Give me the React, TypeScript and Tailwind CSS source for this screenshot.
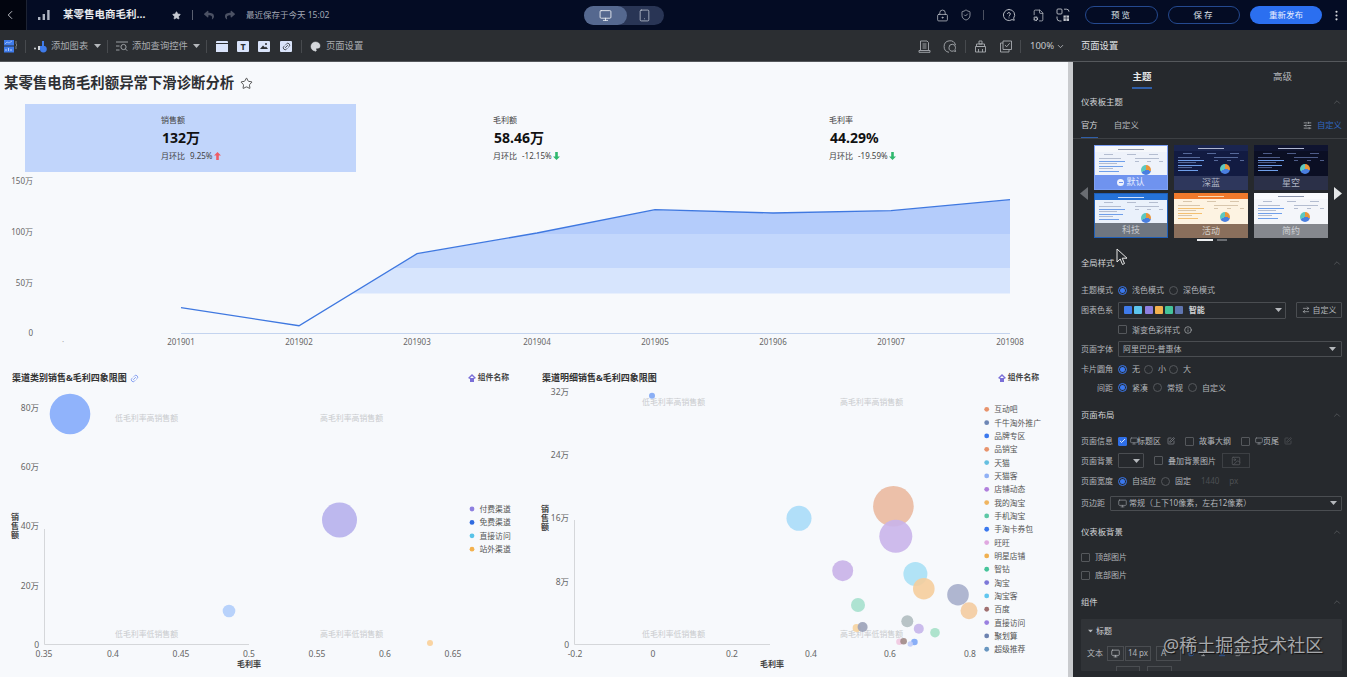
import React from "react";
import { ChevronLeft, ChevronUp, ChevronDown, Star, Monitor, Tablet, LockKeyhole, ShieldCheck, FileCog, EllipsisVertical, SlidersHorizontal, ArrowRightLeft, Info, SquarePen, Image as ImageIcon, Check, Link2, Palette, Bold, Italic, Underline, Strikethrough } from "lucide-react";
import { FaReply, FaShare } from "react-icons/fa";

const Caret = ({ c = "#b5b8bc" }: { c?: string }) => (
  <svg width="7" height="4" viewBox="0 0 7 4"><path d="M0 0h7L3.5 4z" fill={c} /></svg>
);

const Sep = ({ cls = "" }: { cls?: string }) => <span className={`block w-px h-[13px] bg-[#474a4e] ${cls}`} />;

function TopBar() {
  return (
    <div className="flex items-center h-[30px] bg-[#040c24] text-white shrink-0">
      <div className="flex items-center h-full w-[27px] bg-[#02050f] border-r border-[#1d2333] pl-[3px]">
        <ChevronLeft size={14} strokeWidth={1.6} color="#c8cad0" />
      </div>
      <svg className="ml-[11px]" width="12" height="11" viewBox="0 0 12 11">
        <rect x="0" y="7" width="2.4" height="3" fill="#aeb4c2" />
        <rect x="4.6" y="4" width="2.4" height="6" fill="#aeb4c2" />
        <rect x="9.2" y="0" width="2.4" height="10" fill="#aeb4c2" />
      </svg>
      <span className="ml-[13px] text-[10.5px] font-bold w-[100px] whitespace-nowrap text-[#e8eaee]">某零售电商毛利...</span>
      <Star className="ml-[9px]" size={9} fill="#c6cad2" color="#c6cad2" />
      <span className="ml-[11px] block w-px h-[10px] bg-[#5a6070]" />
      <FaReply className="ml-[11px]" size={10} color="#4c5264" />
      <FaShare className="ml-[11px]" size={10} color="#4c5264" />
      <span className="ml-[11px] text-[8.5px] text-[#a3a8b4] whitespace-nowrap w-[80px]">最近保存于今天 15:02</span>
      <div className="ml-[258px] flex items-center h-[19px] w-[80px] rounded-full bg-[#293555]">
        <div className="flex items-center justify-center h-full w-[43px] rounded-full bg-[#55688f]"><Monitor size={13} color="#eef0f5" strokeWidth={1.6} /></div>
        <div className="flex items-center justify-center flex-1 pr-[2px]"><Tablet size={13} color="#c5cbd8" strokeWidth={1.4} /></div>
      </div>
      <LockKeyhole className="ml-[272px]" size={13} color="#c0c3ca" strokeWidth={1.4} />
      <ShieldCheck className="ml-[11px]" size={12} color="#c0c3ca" strokeWidth={1.4} />
      <span className="ml-[11px] block w-px h-[10px] bg-[#4b5060]" />
      <svg className="ml-[18px]" width="14" height="14" viewBox="0 0 24 24" fill="none" stroke="#c0c3ca" strokeWidth="1.6" strokeLinecap="round" strokeLinejoin="round">
        <path d="M12 2.5a9.5 9.5 0 1 0 5.2 17.4l3.8 1.1-1-3.6A9.5 9.5 0 0 0 12 2.5z" />
        <path d="M9.4 9.4a2.6 2.6 0 0 1 5 .8c0 1.7-2.4 2.3-2.4 3.6" />
        <path d="M12 17h.01" />
      </svg>
      <FileCog className="ml-[16px]" size={13} color="#c0c3ca" strokeWidth={1.4} />
      <svg className="ml-[11px]" width="14" height="14" viewBox="0 0 14 14" fill="none" stroke="#c0c3ca" strokeWidth=".9">
        <rect x="1" y="1" width="5" height="5" rx="1" />
        <path d="M8 1.2h2.5A2.5 2.5 0 0 1 13 3.7" />
        <path d="M1 8.5v1.8A2.7 2.7 0 0 0 3.7 13H5.5" />
        <rect x="7.5" y="7.5" width="5.5" height="5.5" fill="#c0c3ca" stroke="none" />
        <path d="M7.5 10h5.5M10.2 7.5v5.5" stroke="#040c24" strokeWidth=".6" />
      </svg>
      <button className="ml-[15px] h-[18px] w-[73px] rounded-full border border-[#24498f] text-[8.5px] tracking-[2px] text-[#dfe2e8]">预览</button>
      <button className="ml-[10px] h-[18px] w-[72px] rounded-full border border-[#24498f] text-[8.5px] tracking-[2px] text-[#dfe2e8]">保存</button>
      <button className="ml-[10px] h-[18px] w-[72px] rounded-full bg-[#2b6ff0] text-[8.5px] text-[#e8eeff]">重新发布</button>
      <EllipsisVertical className="ml-[8px]" size={13} color="#d8dade" />
    </div>
  );
}

const TileBox = ({ children, cls = "" }: { children?: React.ReactNode; cls?: string }) => (
  <span className={`flex items-center justify-center w-[12px] h-[11px] bg-[#d9e3fa] rounded-[1px] ${cls}`}>{children}</span>
);

function ToolBar() {
  return (
    <div className="flex items-center h-[32px] pt-[1px] bg-[#2b2e32] border-b border-[#55585c] shrink-0 text-[9.3px] text-[#a8abb0] whitespace-nowrap">
      <svg className="ml-[4px]" width="14" height="13" viewBox="0 0 14 13">
        <rect width="10" height="5.5" fill="#3f7bea" />
        <rect y="6.5" width="10" height="6" fill="#3f7bea" />
        <path d="M1 4l2-2 2 1 3-2" stroke="#cfe0ff" strokeWidth=".6" fill="none" />
        <path d="M2 11V9M4.5 11V8M7 11V9" stroke="#cfe0ff" strokeWidth=".8" />
        <path d="M12 1v3l1 1-1 1v3" stroke="#9a9da2" strokeWidth=".7" fill="none" />
      </svg>
      <Sep cls="ml-[7px]" />
      <svg className="ml-[8px]" width="14" height="13" viewBox="0 0 14 13">
        <rect x="0" y="7.5" width="2" height="2" rx="1" fill="#d5d8dc" />
        <rect x="4" y="6" width="2" height="4" fill="#d5d8dc" />
        <rect x="8" y="1" width="2" height="5" fill="#3f7bea" />
        <path d="M6 9a3.4 3.4 0 1 0 6.8 0c0-1.5-1-2.6-1.8-3H6z" fill="#3f7bea" />
      </svg>
      <span className="ml-[3px] w-[37px]">添加图表</span>
      <span className="ml-[6px] flex"><Caret /></span>
      <Sep cls="ml-[6px]" />
      <svg className="ml-[8px]" width="12" height="11" viewBox="0 0 12 11" fill="none" stroke="#a8abb0" strokeWidth=".9">
        <path d="M0 1h12M0 5h3.5M0 9h3.5" />
        <circle cx="7.5" cy="6" r="2.6" />
        <path d="M9.5 8l1.8 1.8" />
      </svg>
      <span className="ml-[4px] w-[57px]">添加查询控件</span>
      <span className="ml-[4px] flex"><Caret /></span>
      <Sep cls="ml-[6px]" />
      <TileBox cls="ml-[9px]">
        <span className="block w-full h-[9px] mt-[2px] bg-[#d9e3fa] border-t border-[#2b2e32]" />
      </TileBox>
      <TileBox cls="ml-[9px]"><span className="text-[9px] leading-none font-bold text-[#2b2e32]">T</span></TileBox>
      <TileBox cls="ml-[9px]">
        <svg width="10" height="8" viewBox="0 0 10 8"><path d="M1 7l3-3.5 2 2 1-1 2 2.5z" fill="#2b2e32" /><circle cx="7" cy="2" r="1" fill="#2b2e32" /></svg>
      </TileBox>
      <TileBox cls="ml-[10px]"><Link2 size={9} color="#2b2e32" strokeWidth={2} className="-rotate-45" /></TileBox>
      <Sep cls="ml-[9px]" />
      <Palette className="ml-[8px]" size={11} color="#d5d8dc" fill="#d5d8dc" strokeWidth={1} />
      <span className="ml-[5px] w-[38px]">页面设置</span>
      <svg className="ml-[554px]" width="13" height="13" viewBox="0 0 13 13" fill="none" stroke="#a8abb0" strokeWidth=".9">
        <path d="M2.5 10V1h6.5l1.5 1.5V10" />
        <path d="M4.5 4h4M4.5 6h4M4.5 8h4" />
        <path d="M1 10.5h11v1.8H1z" />
      </svg>
      <svg className="ml-[12px]" width="14" height="13" viewBox="0 0 14 13" fill="none" stroke="#a8abb0" strokeWidth=".9">
        <path d="M6 12.3A5.8 5.8 0 1 1 12.5 5" />
        <path d="M6 7.5a3 3 0 0 1 6.5 0c0 1.2-.5 2-.5 2l.6 2-2-.6a3.2 3.2 0 0 1-4.6-3.4z" />
      </svg>
      <Sep cls="ml-[8px]" />
      <svg className="ml-[8px]" width="13" height="13" viewBox="0 0 13 13" fill="none" stroke="#a8abb0" strokeWidth=".9">
        <path d="M5 1h3v3H5zM2.5 4h8v2.5h-8zM1.5 6.5h10V12h-10z" />
        <path d="M4.5 9v3M8.5 9v3" />
      </svg>
      <svg className="ml-[13px]" width="12" height="13" viewBox="0 0 12 13" fill="none" stroke="#a8abb0" strokeWidth=".9">
        <path d="M3 1h8.5v8.5H3z" />
        <path d="M3 3H.5v9H9V9.5" />
        <path d="M5 5l1.6 1.8L9.7 3.2" />
      </svg>
      <Sep cls="ml-[8px]" />
      <span className="ml-[9px] w-[25px] text-[9.5px] text-[#c5c8cc]">100%</span>
      <ChevronDown className="ml-[1px]" size={9} color="#c5c8cc" />
      <span className="ml-[16px] text-[#e0e2e5]">页面设置</span>
    </div>
  );
}

const Arrow = ({ up }: { up?: boolean }) => (
  <svg width="7" height="8" viewBox="0 0 7 8" className="ml-[1px]">
    {up ? <path d="M3.5 0L7 3.6H4.8V8H2.2V3.6H0z" fill="#ef5c66" /> : <path d="M3.5 8L7 4.4H4.8V0H2.2V4.4H0z" fill="#2fb86e" />}
  </svg>
);

function Kpi({ label, value, rate, up, cls }: { label: string; value: string; rate: string; up?: boolean; cls?: string }) {
  return (
    <div className={`h-[68px] pl-[136px] pt-[10px] ${cls}`}>
      <div className="text-[8px] leading-[12px] text-[#444]">{label}</div>
      <div className="text-[14px] leading-[18px] mt-[3px] ml-[1px] font-bold text-[#111]">{value}</div>
      <div className="flex items-center text-[8px] leading-[12px] mt-[3px] text-[#444]">
        <span className="w-[29px]">月环比</span>
        <span>{rate}</span>
        <Arrow up={up} />
      </div>
    </div>
  );
}

function LineChart() {
  const xs = [181, 299, 417, 537, 655, 773, 891, 1010];
  const ys = [307.7, 325.7, 253.7, 233, 209.7, 213, 210.7, 199.7];
  const pts = xs.map((x, i) => `${x},${ys[i]}`).join(" ");
  const area = `352,293.5 ${xs.slice(2).map((x, i) => `${x},${ys[i + 2]}`).join(" ")} 1010,293.5`;
  const labels = ["201901", "201902", "201903", "201904", "201905", "201906", "201907", "201908"];
  return (
    <svg width="1068" height="193" viewBox="0 172 1068 193" className="block overflow-visible">
      <defs>
        <linearGradient id="band" gradientUnits="userSpaceOnUse" x1="0" y1="199" x2="0" y2="294">
          <stop offset="0" stopColor="#b4ccfb" />
          <stop offset="0.37" stopColor="#b4ccfb" />
          <stop offset="0.37" stopColor="#c3d7fc" />
          <stop offset="0.73" stopColor="#c3d7fc" />
          <stop offset="0.73" stopColor="#d7e5fd" />
          <stop offset="1" stopColor="#d7e5fd" />
        </linearGradient>
      </defs>
      {[["150万", 181], ["100万", 232], ["50万", 283], ["0", 333]].map(([t, y]) => (
        <text key={t} x="33" y={Number(y) + 3} textAnchor="end" fontSize="8" fill="#666">{t}</text>
      ))}
      <polygon points={area} fill="url(#band)" />
      <line x1="181" y1="333.5" x2="1010" y2="333.5" stroke="#c4d4ef" />
      <polyline points={pts} fill="none" stroke="#3f78e0" strokeWidth="1.3" />
      <text x="63" y="345" textAnchor="middle" fontSize="8" fill="#aaa">·</text>
      {labels.map((l, i) => (
        <text key={l} x={xs[i]} y="345" textAnchor="middle" fontSize="8" fill="#666">{l}</text>
      ))}
    </svg>
  );
}

type B = [number, number, number, string];

function Scatter({ x0, w, xt, yt, axis, axisTop, xEnd, quad, bubbles, legend, legendX, legendY, legendStep, xName, yNameX, yNameY }: {
  x0: number; w: number; xt: [string, number][]; yt: [string, number][]; axis: number; axisTop: number; xEnd: number;
  quad: [string, number, number][]; bubbles: B[]; legend: [string, string][]; legendX: number; legendY: number; legendStep: number; xName: number; yNameX: number; yNameY: number;
}) {
  return (
    <svg width={w} height="286" viewBox={`${x0} 391 ${w} 286`} className="block overflow-visible">
      {yt.map(([t, y]) => <text key={t} x={axis - 5} y={y + 3} textAnchor="end" fontSize="8.5" fill="#666">{t}</text>)}
      <path d={`M${axis + 0.5} ${axisTop}V644.5H${xEnd}`} stroke="#d5d7da" fill="none" />
      {xt.map(([t, x]) => <text key={t} x={x} y="657" textAnchor="middle" fontSize="8.5" fill="#666">{t}</text>)}
      <text x={xName} y="667" textAnchor="middle" fontSize="8" fontWeight="600" fill="#444">毛利率</text>
      {["销", "售", "额"].map((c, i) => <text key={c} x={yNameX} y={yNameY + i * 9} textAnchor="middle" fontSize="8" fontWeight="600" fill="#444">{c}</text>)}
      {quad.map(([t, x, y]) => <text key={t} x={x} y={y + 3} fontSize="7.9" fill="#c9cbce">{t}</text>)}
      {bubbles.map(([x, y, r, c], i) => <circle key={i} cx={x} cy={y} r={r} fill={c} fillOpacity=".9" />)}
      {legend.map(([t, c], i) => (
        <g key={t}>
          <circle cx={legendX} cy={legendY + i * legendStep} r="2.4" fill={c} />
          <text x={legendX + 7.5} y={legendY + i * legendStep + 3} fontSize="7.8" fill="#555">{t}</text>
        </g>
      ))}
    </svg>
  );
}

const ChartHead = ({ title, link, w }: { title: string; link?: boolean; w: string }) => (
  <div className={`flex items-center h-[26px] pl-[12px] ${w}`}>
    <span className="text-[9px] font-bold text-[#333] whitespace-nowrap">{title}</span>
    {link && <Link2 className="ml-[3px] -rotate-45" size={9} color="#6f8ff0" />}
    <span className="ml-auto flex items-center text-[7.8px] font-semibold text-[#444]">
      <svg width="8" height="9" viewBox="0 0 8 9" className="mr-[2px]"><path d="M4 0l4 4-2 1v3H2V5L0 4z" fill="#7a6fd8" /><path d="M4 2l2 2H2z" fill="#fff" /></svg>
      组件名称
    </span>
  </div>
);

function Canvas() {
  return (
    <div className="w-[1068px] bg-[#f7f9fc] overflow-hidden shrink-0">
      <div className="flex items-center h-[42px] pl-[4px] text-[14.4px] font-bold text-[#2d2f33] whitespace-nowrap">
        某零售电商毛利额异常下滑诊断分析
        <Star className="ml-[6px]" size={13} color="#333" strokeWidth={1.5} />
      </div>
      <div className="grid grid-cols-[332px_336px_331px] pl-[25px]">
        <Kpi cls="bg-[#c1d5fb] mr-[1px]" label="销售额" value="132万" rate="9.25%" up />
        <Kpi label="毛利额" value="58.46万" rate="-12.15%" />
        <Kpi label="毛利率" value="44.29%" rate="-19.59%" />
      </div>
      <LineChart />
      <div className="flex">
        <div className="w-[530px]">
          <div className="pr-[21px]"><ChartHead title="渠道类别销售&毛利四象限图" link w="w-full" /></div>
          <Scatter x0={0} w={530} axis={44} axisTop={529} xEnd={249}
            xt={[["0.35", 44], ["0.4", 113], ["0.45", 181], ["0.5", 249], ["0.55", 317], ["0.6", 385], ["0.65", 453]]}
            yt={[["80万", 408], ["60万", 467], ["40万", 526], ["20万", 586], ["0", 645]]}
            quad={[["低毛利率高销售额", 115, 418], ["高毛利率高销售额", 320, 418], ["低毛利率低销售额", 115, 634], ["高毛利率低销售额", 320, 634]]}
            bubbles={[[70, 414, 20.3, "#84abfb"], [339.5, 520, 17.5, "#b6b0ec"], [229, 611, 6.3, "#b0cdfb"], [430, 643, 3, "#f9cf98"]]}
            legend={[["付费渠道", "#8d7fe0"], ["免费渠道", "#2f6be0"], ["直接访问", "#58c3e8"], ["站外渠道", "#f3b14e"]]}
            legendX={472} legendY={509} legendStep={13.4} xName={249} yNameX={15} yNameY={520} />
        </div>
        <div className="w-[538px]">
          <div className="pr-[29px]"><ChartHead title="渠道明细销售&毛利四象限图" w="w-full" /></div>
          <Scatter x0={530} w={538} axis={574} axisTop={520} xEnd={770}
            xt={[["-0.2", 575], ["0", 653], ["0.2", 732], ["0.4", 811], ["0.6", 890], ["0.8", 970]]}
            yt={[["32万", 392], ["24万", 455], ["16万", 518], ["8万", 582], ["0", 645]]}
            quad={[["低毛利率高销售额", 642, 402], ["高毛利率高销售额", 840, 402], ["低毛利率低销售额", 642, 634], ["高毛利率低销售额", 840, 634]]}
            bubbles={[
              [893.4, 506.3, 20.3, "#eab9a0"], [895.8, 536.3, 16.5, "#c9b4ea"], [799, 518.3, 12.5, "#a9dcf8"], [842.7, 570.7, 10.5, "#c8b1e8"],
              [915.4, 574, 12, "#a8e0f5"], [923.8, 588.7, 10.8, "#f5cd9c"], [958, 594.7, 10.8, "#a6aecb"], [969, 610.7, 8.5, "#f3cba0"],
              [858, 605, 7, "#a5e0cd"], [907.3, 621.3, 6, "#b0bcc0"], [918.8, 628.7, 5, "#c5b5ea"], [935, 632.7, 4.8, "#a5e0c8"],
              [856.6, 628, 4, "#f6d39f"], [862.6, 627, 5, "#9aa1b8"], [899.5, 641.7, 3.3, "#f0c8e0"], [903.6, 641.3, 3.3, "#a08a86"],
              [914.4, 642, 3.3, "#7ca6f6"], [910.3, 644, 2.7, "#c0ccf8"], [652, 395.7, 3, "#7ea6f4"],
            ]}
            legend={[["互动吧", "#e8936c"], ["千牛淘外推广", "#6d86b5"], ["品牌专区", "#3a78ee"], ["品销宝", "#e8936c"], ["天猫", "#65bfe0"], ["天猫客", "#8fb0f5"], ["店铺动态", "#b07fdc"], ["我的淘宝", "#f0b560"], ["手机淘宝", "#5cc8a5"], ["手淘卡券包", "#3a78ee"], ["旺旺", "#e0a8e0"], ["明星店铺", "#f0b050"], ["智钻", "#45c49a"], ["淘宝", "#7d78d8"], ["淘宝客", "#60c6ef"], ["百度", "#a07070"], ["直接访问", "#9a80e0"], ["聚划算", "#6c82b0"], ["超级推荐", "#6896c0"]]}
            legendX={986.7} legendY={409.3} legendStep={13.33} xName={772} yNameX={545} yNameY={512} />
        </div>
      </div>
    </div>
  );
}

const Radio = ({ on, label, cls = "" }: { on?: boolean; label: string; cls?: string }) => (
  <span className={`flex items-center ${cls}`}>
    <span className={`flex items-center justify-center w-[9px] h-[9px] rounded-full border ${on ? "border-[#3a78ee]" : "border-[#55585c]"}`}>
      {on && <span className="block w-[5px] h-[5px] rounded-full bg-[#3a78ee]" />}
    </span>
    <span className="ml-[5px]">{label}</span>
  </span>
);

const Check9 = ({ on, cls = "" }: { on?: boolean; cls?: string }) => (
  <span className={`flex items-center justify-center w-[9px] h-[9px] rounded-[1px] border ${on ? "bg-[#2f6fe8] border-[#2f6fe8]" : "border-[#55585c]"} ${cls}`}>
    {on && <Check size={8} color="#fff" strokeWidth={3} />}
  </span>
);

const Head = ({ title, cls = "" }: { title: string; cls?: string }) => (
  <div className={`flex items-center justify-between h-[20px] text-[#d2d4d7] text-[8.4px] pr-[0px] ${cls}`}>
    {title}
    <ChevronUp size={10} color="#55585c" />
  </div>
);

const Row = ({ label, h = "h-[20px]", children, end }: { label: string; h?: string; children?: React.ReactNode; end?: boolean }) => (
  <div className={`flex items-center ${h}`}>
    <span className={`w-[32px] mr-[5px] shrink-0 whitespace-nowrap ${end ? "text-right" : ""}`}>{label}</span>
    {children}
  </div>
);

function Thumb({ label, bg, head, band, title, line, on, hot }: { label: string; bg: string; head: string; band: string; title: string; line: string; on?: boolean; hot?: boolean }) {
  const L = ({ w, c = line }: { w: string; c?: string }) => <span className={`block h-px ${w} ${c}`} />;
  return (
    <div className={`relative h-[45px] overflow-hidden ${bg} ${on ? "border border-[#7da0f5]" : ""}`}>
      <div className={`flex items-center justify-center h-[6px] ${head}`}><L w="w-[26px]" c={title} /></div>
      <div className="flex justify-between px-[9px] pt-[2px]">
        <L w="w-[9px]" /><L w="w-[9px]" /><L w="w-[9px]" />
      </div>
      <div className="flex gap-[6px] px-[4px] pt-[3px]">
        <div className="flex flex-col gap-[1.5px] w-[30px]">
          <L w="w-[22px]" />
          <L w="w-[26px]" c={hot ? "bg-[#f4c070]" : "bg-[#6f9fea]"} />
          <L w="w-[18px]" />
          <L w="w-[24px]" c={hot ? "bg-[#f4c070]" : "bg-[#6f9fea]"} />
          <L w="w-[14px]" />
          <L w="w-[20px]" c={hot ? "bg-[#f4c070]" : "bg-[#6f9fea]"} />
        </div>
        <div className="flex flex-col gap-[2px] flex-1">
          <L w="w-[24px]" />
          <div className="flex justify-between"><L w="w-[4px]" /><L w="w-[4px]" /><L w="w-[4px]" /></div>
        </div>
      </div>
      <span className="absolute left-[46px] top-[19px] block w-[10px] h-[10px] rounded-full bg-[conic-gradient(#e8953a_0_28%,#4a7fe0_28%_68%,#5cc8c0_68%)]" />
      <div className={`absolute left-0 right-0 bottom-0 h-[14px] flex items-center justify-center text-[9px] ${band}`}>
        {on && (
          <span className="flex items-center justify-center w-[7px] h-[7px] rounded-full bg-[#eef2fd] mr-[2px]">
            <span className="block w-[4px] h-px bg-[#6f93ef]" />
          </span>
        )}
        {label}
      </div>
    </div>
  );
}

function Panel() {
  const sw = ["#3f7bea", "#5cc4ec", "#8d7fe0", "#f3b14e", "#45c49a", "#5f75b0"];
  return (
    <div className="relative w-[274px] shrink-0 bg-[#26292d] text-[8px] text-[#b3b6ba] whitespace-nowrap overflow-hidden">
      <div className="flex h-[28px] items-start text-[9.5px] pt-[8px]">
        <div className="ml-[59px] flex flex-col items-center font-bold text-[#e6e8ea]">
          主题
          <span className="block mt-[3px] w-[20px] h-[1.5px] bg-[#2f5ea8]" />
        </div>
        <div className="ml-[121px]">高级</div>
      </div>
      <div className="pl-[8px] pr-[5px]"><Head title="仪表板主题" cls="mt-[2px]" /></div>
      <div className="flex items-center h-[27px] border-b border-[#3d4044] pl-[8px] pr-[5px] text-[8.4px]">
        <span className="relative flex items-center h-full text-[#d2d4d7]">官方<span className="absolute left-0 right-0 bottom-0 h-[1.5px] bg-[#2f5ea8]" /></span>
        <span className="ml-[16px]">自定义</span>
        <SlidersHorizontal className="ml-auto" size={9} color="#b3b6ba" />
        <span className="ml-[5px] text-[#2f66c0]">自定义</span>
      </div>
      <div className="flex items-center pt-[6px]">
        <svg className="ml-[7px]" width="8" height="13" viewBox="0 0 8 13"><path d="M8 0v13L0 6.5z" fill="#6a6d72" /></svg>
        <div className="ml-[6px] w-[234px]">
          <div className="grid grid-cols-3 gap-x-[6px] gap-y-[3px]">
            <Thumb on label="默认" bg="bg-[#eef2fa]" head="bg-[#f5f7fb]" title="bg-[#8a93a8]" line="bg-[#b4bdd0]" band="bg-[#6f93ef] text-[#e8eeff]" />
            <Thumb label="深蓝" bg="bg-[#121b42]" head="bg-[#1a2550]" title="bg-[#aeb6d0]" line="bg-[#56699a]" band="bg-[#2e375c] text-[#aeb4c4]" />
            <Thumb label="星空" bg="bg-[#0b0f24]" head="bg-[#0f1430]" title="bg-[#aeb6d0]" line="bg-[#4e5c88]" band="bg-[#2b3048] text-[#aeb4c4]" />
            <Thumb label="科技" bg="bg-[#eaf1fb] border border-[#1f5fb8]" head="bg-[#2572d8]" title="bg-[#cfe0fb]" line="bg-[#b4bdd0]" band="bg-[#6f7680] text-[#c5c8cc]" />
            <Thumb hot label="活动" bg="bg-[#fdf3e2]" head="bg-[#f07a2c]" title="bg-[#fbd9b0]" line="bg-[#d8c6ac]" band="bg-[#8a6f5c] text-[#d5d0c8]" />
            <Thumb label="简约" bg="bg-[#f4f6fa]" head="bg-[#fafbfd]" title="bg-[#8a93a8]" line="bg-[#b4bdd0]" band="bg-[#85888e] text-[#d0d2d6]" />
          </div>
          <div className="flex justify-center gap-[4px] mt-[1px] pl-[2px]">
            <span className="block w-[16px] h-[2px] bg-[#eceef0]" />
            <span className="block w-[10px] h-[2px] bg-[#6a6d72]" />
          </div>
        </div>
        <svg className="ml-[6px]" width="8" height="13" viewBox="0 0 8 13"><path d="M0 0v13l8-6.5z" fill="#e4e6e8" /></svg>
      </div>

      <div className="pl-[8px] pr-[5px]">
        <Head title="全局样式" cls="mt-[12px]" />
        <div className="mt-[7px]">
          <Row label="主题模式">
            <Radio on label="浅色模式" />
            <Radio label="深色模式" cls="ml-[5px]" />
          </Row>
          <Row label="图表色系">
            <div className="flex items-center h-[17px] w-[168px] border border-[#4a4d51] rounded-[1px] pl-[5px] pr-[3px]">
              {sw.map((c) => <span key={c} className="block w-[8px] h-[8px] rounded-[1px] mr-[2.3px]" style={{ background: c }} />)}
              <span className="ml-[3px] text-[#d2d4d7] font-semibold">智能</span>
              <span className="ml-auto flex"><Caret /></span>
            </div>
            <div className="flex items-center justify-center ml-[10px] h-[16px] w-[46px] border border-[#4a4d51] rounded-[1px]">
              <ArrowRightLeft size={8} color="#b3b6ba" className="mr-[3px]" />自定义
            </div>
          </Row>
          <Row label="" h="h-[19px]">
            <Check9 />
            <span className="ml-[5px]">渐变色彩样式</span>
            <Info className="ml-[4px]" size={8} color="#b3b6ba" />
          </Row>
          <Row label="页面字体">
            <div className="flex items-center h-[16px] w-[224px] border border-[#4a4d51] rounded-[1px] pl-[4px] pr-[5px]">
              阿里巴巴-普惠体
              <span className="ml-auto flex"><Caret /></span>
            </div>
          </Row>
          <Row label="卡片圆角">
            <Radio on label="无" />
            <Radio label="小" cls="ml-[4px]" />
            <Radio label="大" cls="ml-[3px]" />
          </Row>
          <Row label="间距" h="h-[17px]" end>
            <Radio on label="紧凑" />
            <Radio label="常规" cls="ml-[5px]" />
            <Radio label="自定义" cls="ml-[5px]" />
          </Row>
        </div>

        <Head title="页面布局" cls="mt-[9px]" />
        <div className="mt-[6px]">
          <Row label="页面信息">
            <Check9 on />
            <Monitor className="ml-[3px]" size={8} color="#8d9095" />
            <span className="ml-[-1px] pl-[0px]">标题区</span>
            <SquarePen className="ml-[6px]" size={8} color="#8d9095" />
            <Check9 cls="ml-[10px]" />
            <span className="ml-[5px]">故事大纲</span>
            <Check9 cls="ml-[10px]" />
            <Monitor className="ml-[5px]" size={8} color="#8d9095" />
            <span>页尾</span>
            <SquarePen className="ml-[5px]" size={8} color="#55585c" />
          </Row>
          <Row label="页面背景" h="h-[19px]">
            <div className="flex items-center justify-end h-[15px] w-[26px] border border-[#4a4d51] rounded-[1px] pr-[3px]"><Caret /></div>
            <Check9 cls="ml-[10px]" />
            <span className="ml-[5px]">叠加背景图片</span>
            <div className="flex items-center justify-center ml-[6px] w-[28px] h-[15px] border border-[#3d4044]"><ImageIcon size={10} color="#55585c" /></div>
          </Row>
          <Row label="页面宽度" h="h-[22px]">
            <Radio on label="自适应" />
            <Radio label="固定" cls="ml-[5px]" />
            <span className="ml-[10px] text-[#4d5054]">1440</span>
            <span className="ml-[10px] text-[#4d5054]">px</span>
          </Row>
          <div className="flex items-center h-[22px]">
            <span className="w-[29px]">页边距</span>
            <div className="flex items-center h-[15px] w-[232px] border border-[#4a4d51] rounded-[1px] pl-[7px] pr-[4px]">
              <Monitor size={9} color="#8d9095" />
              <span className="ml-[2px]">常规（上下10像素，左右12像素）</span>
              <span className="ml-auto flex"><Caret /></span>
            </div>
          </div>
        </div>

        <Head title="仪表板背景" cls="mt-[8px]" />
        <div className="mt-[6px]">
          <div className="flex items-center h-[18px]"><Check9 /><span className="ml-[5px]">顶部图片</span></div>
          <div className="flex items-center h-[18px]"><Check9 /><span className="ml-[5px]">底部图片</span></div>
        </div>

        <Head title="组件" cls="mt-[8px]" />
        <div className="mt-[7px] h-[52px] bg-[#303337] rounded-[1px] px-[6px] overflow-hidden">
          <div className="flex items-center h-[24px] text-[#d2d4d7]"><span className="mr-[2px] flex scale-75"><Caret /></span>标题</div>
          <div className="flex items-center h-[16px] mt-[2px]">
            <span className="w-[20px]">文本</span>
            <div className="flex items-center justify-center w-[17px] h-[15px] border border-[#4a4d51]"><Monitor size={9} color="#b3b6ba" /></div>
            <div className="flex items-center justify-center w-[26px] h-[15px] border border-[#4a4d51] ml-[1px]">14 px</div>
            <div className="flex items-center w-[25px] h-[15px] border border-[#4a4d51] ml-[5px] pl-[4px]">A</div>
            <Bold className="ml-[6px]" size={8} color="#2f66c0" />
            <Italic className="ml-[5px]" size={8} color="#b3b6ba" />
            <Underline className="ml-[10px]" size={8} color="#2f66c0" />
            <Strikethrough className="ml-[8px]" size={8} color="#b3b6ba" />
          </div>
          <div className="flex mt-[5px] ml-[29px] gap-[7px]">
            <span className="block w-[24px] h-[10px] border border-[#4a4d51]" />
            <span className="block w-[25px] h-[10px] border border-[#4a4d51]" />
          </div>
        </div>
      </div>
    </div>
  );
}

export default function App() {
  return (
    <div className="relative w-[1347px] h-[677px] flex flex-col overflow-hidden bg-[#26292d] [font-family:'Noto_Sans','Noto_Sans_CJK_SC',sans-serif]">
      <TopBar />
      <ToolBar />
      <div className="flex flex-1 min-h-0">
        <Canvas />
        <div className="w-[5px] shrink-0 bg-[#c9cbce]" />
        <Panel />
      </div>
      <svg className="absolute left-[1116px] top-[248px]" width="12" height="18" viewBox="0 0 12 18">
        <path d="M1 1v13l3.2-3 2.3 5.5 2-1-2.3-5.3H11z" fill="#26292d" stroke="#e8e8e8" strokeWidth="1" />
      </svg>
      <div className="absolute left-[1163px] top-[632px] text-[18px] leading-[26px] text-[#a6a8ab] whitespace-nowrap [text-shadow:1px_1px_1px_#111]">@稀土掘金技术社区</div>
    </div>
  );
}
